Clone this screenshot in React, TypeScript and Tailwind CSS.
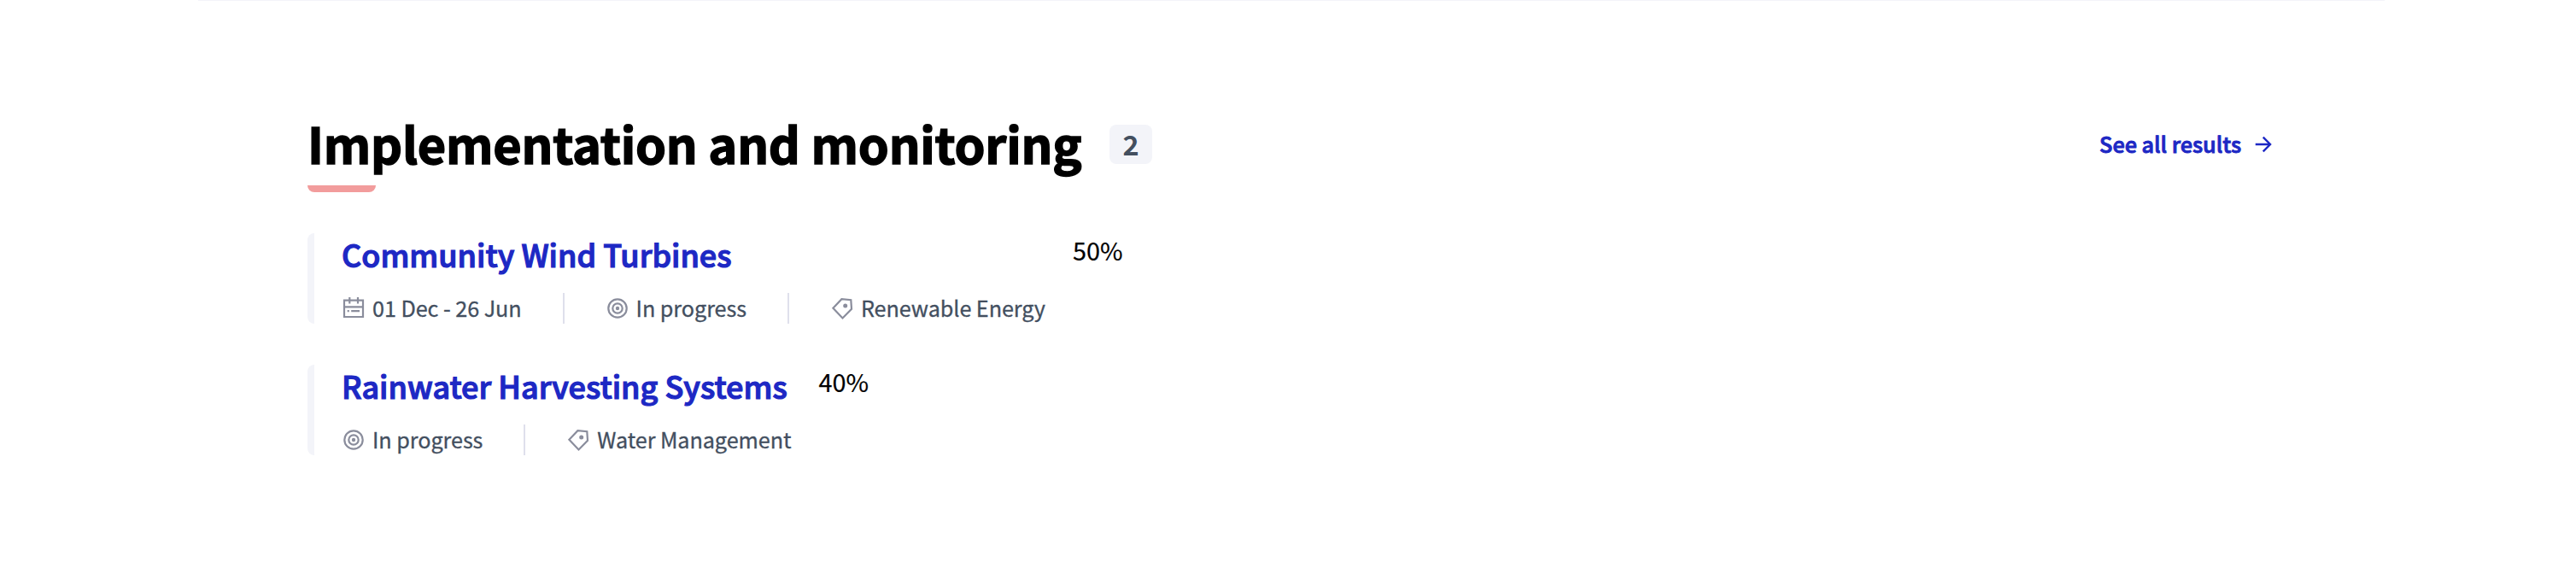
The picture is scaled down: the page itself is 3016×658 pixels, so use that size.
import type { ReactNode } from "react";

function CalendarIcon() {
  return (
    <svg width="28" height="28" viewBox="0 0 28 28" fill="none" stroke="#8a8d9c" strokeWidth="2.2" className="shrink-0">
      <path d="M3 4.6H25V24H3ZM3 12.3H25M9.3 1V8.6M19 1V8.6M6.7 17.2H8.8M11.2 17.2H21" />
    </svg>
  );
}

function TargetIcon() {
  return (
    <svg width="28" height="28" viewBox="0 0 28 28" fill="none" stroke="#8a8d9c" strokeWidth="2.2" className="shrink-0">
      <circle cx="14" cy="14" r="10.7" />
      <circle cx="14" cy="14" r="5.7" />
      <circle cx="14" cy="14" r="2.2" fill="#8a8d9c" stroke="none" />
    </svg>
  );
}

function TagIcon() {
  return (
    <svg width="28" height="28" viewBox="0 0 28 28" fill="none" stroke="#8a8d9c" strokeWidth="2.2" className="shrink-0">
      <path d="M3.4 13.8L13.4 3.2L24.3 4.2L25 14.8L14.5 25.5Z" />
      <circle cx="17.7" cy="11" r="2.5" fill="#8a8d9c" stroke="none" />
    </svg>
  );
}

function ArrowIcon() {
  return (
    <svg width="28" height="22" viewBox="0 0 28 22" fill="none" stroke="#1d28c4" strokeWidth="2.4" className="shrink-0">
      <path d="M4.7 12H22M13.7 3.7L22 12L13.7 20.3" />
    </svg>
  );
}

function Meta({ icon, children }: { icon: ReactNode; children: ReactNode }) {
  return (
    <div className="flex h-9 gap-2 text-[25.2px] leading-[34px] tracking-[-0.06px] text-[#434f5f]">
      <span className="pt-1">{icon}</span>
      <span className="[-webkit-text-stroke:0.3px]">{children}</span>
    </div>
  );
}

function Divider() {
  return <div className="mx-12 h-9 w-0.5 bg-[#dfe0ec]" />;
}

function Item({ title, percent, children }: { title: string; percent: string; children: ReactNode }) {
  return (
    <li className="flex h-[106px]">
      <div className="w-2 rounded-l-lg bg-[#f3f4f9]" />
      <div className="ml-8 flex flex-col justify-between">
        <h3 className="text-[36px] leading-[48px] font-medium text-[#1d28c4] [-webkit-text-stroke:1.2px]">
          {title}
        </h3>
        <div className="flex items-center">{children}</div>
      </div>
      <span className="ml-8 text-[28.8px] leading-[40px] text-black [-webkit-text-stroke:0.2px]">{percent}</span>
    </li>
  );
}

export default function App() {
  return (
    <main className="h-[658px] bg-white pr-[224px] pl-[232px] font-['Noto_Sans_CJK_JP',sans-serif] whitespace-nowrap">
      <section className="border-t border-[#f3f4f9] px-32 pt-[126px]">
        <header className="flex items-start justify-between">
          <div>
            <div className="flex items-start">
              <h2 className="w-[939px] text-[57.6px] leading-[80px] font-bold tracking-[-0.23px] text-black [-webkit-text-stroke:1.5px]">
                Implementation and monitoring
              </h2>
              <span className="mt-[19px] h-[46px] w-[50px] rounded-lg bg-[#f3f4f9] text-center text-[32.4px] leading-[44px] font-bold text-[#434f5f]">
                2
              </span>
            </div>
            <div className="mt-2.5 h-2 w-20 rounded-b-lg bg-[#f29c9c]" />
          </div>
          <a className="mt-px flex h-20 items-center gap-3 text-[25.2px] leading-[80px] font-medium text-[#1d28c4]">
            <span className="[-webkit-text-stroke:0.9px]">See all results</span>
            <ArrowIcon />
          </a>
        </header>
        <ul className="mt-12 flex flex-col gap-12">
          <Item title="Community Wind Turbines" percent="50%">
            <Meta icon={<CalendarIcon />}>01 Dec - 26 Jun</Meta>
            <Divider />
            <Meta icon={<TargetIcon />}>In progress</Meta>
            <Divider />
            <Meta icon={<TagIcon />}>Renewable Energy</Meta>
          </Item>
          <Item title="Rainwater Harvesting Systems" percent="40%">
            <Meta icon={<TargetIcon />}>In progress</Meta>
            <Divider />
            <Meta icon={<TagIcon />}>Water Management</Meta>
          </Item>
        </ul>
      </section>
    </main>
  );
}
